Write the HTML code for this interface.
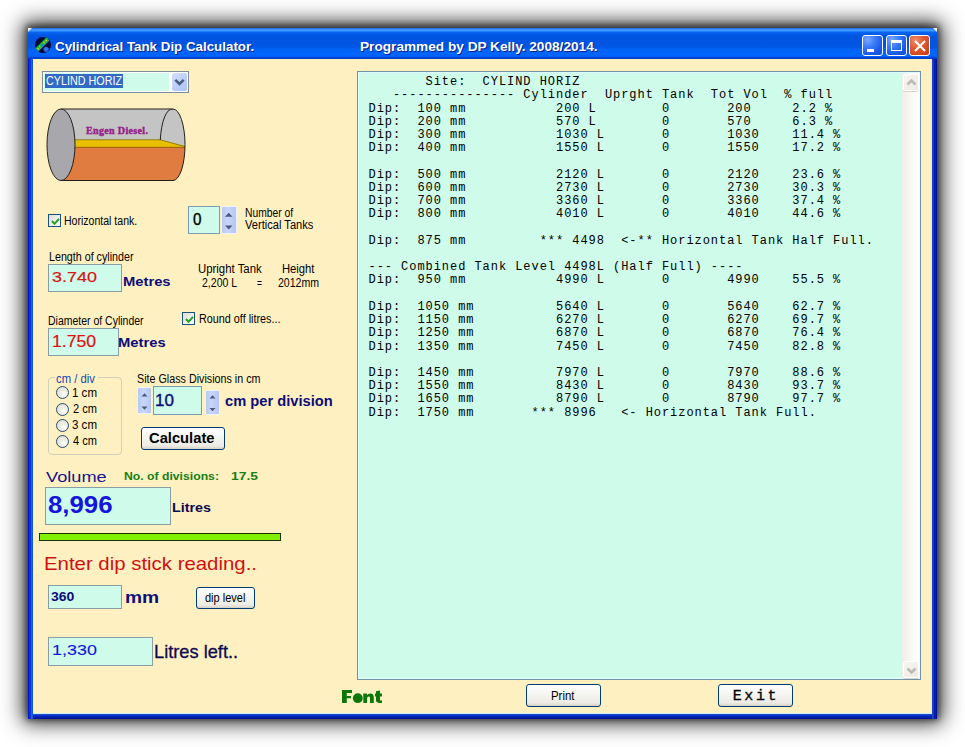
<!DOCTYPE html>
<html><head><meta charset="utf-8">
<style>
html,body{margin:0;padding:0;width:965px;height:747px;overflow:hidden;background:#fff;position:relative}
*{box-sizing:border-box}
.a{position:absolute}
.t{position:absolute;white-space:pre;}
.con{position:absolute;top:0;white-space:pre;color:#000}
.c{position:absolute;left:0;white-space:pre}
#win{position:absolute;left:28px;top:28px;width:909px;height:691px;
 box-shadow:0 -1px 6px 2px rgba(0,0,0,.5),0 -1px 20px 5px rgba(0,0,0,.8);background:#0831d9}
#title{position:absolute;left:28px;top:28px;width:909px;height:31px;
 background:linear-gradient(to bottom,#0a4fd8 0px,#3d95ff 1px,#3d95ff 3px,#0a66f0 4px,#0058e6 7px,#0054e0 10px,#0055e2 19px,#0062f6 21px,#0066ff 27px,#0058f0 29px,#003cc8 30px,#003cc8 31px)}
#lb{position:absolute;left:28px;top:59px;width:5px;height:660px;background:linear-gradient(to right,#001ccc 0,#001ccc 1px,#0a32dc 1px,#0a32dc 3px,#1664f0 3px,#1664f0 4px,#0a58e2 4px)}
#rb{position:absolute;left:932px;top:59px;width:5px;height:660px;background:linear-gradient(to right,#1a44c0 0,#1a44c0 1px,#0a3ad4 1px,#0a3ad4 2px,#0020b0 2px,#0020b0 4px,#00129a 4px)}
#rl{position:absolute;left:931px;top:59px;width:1px;height:655px;background:#c8f0ff}
#bb{position:absolute;left:28px;top:713px;width:909px;height:6px;background:linear-gradient(to bottom,#c8f0ff 0,#c8f0ff 1px,#1a44c0 1px,#1a44c0 2px,#0a3ad4 2px,#0a3ad4 3px,#0020b0 3px,#0020b0 5px,#00129a 5px)}
#client{position:absolute;left:33px;top:59px;width:898px;height:654px;background:#fff0c2}
.tb{position:absolute;background:#cffbea;border:1px solid #7a9cb0}
.tbg{position:absolute;background:#cffbea;border:1px solid #8a9ca4}
.spin{position:absolute;background:linear-gradient(to right,#b6c8f4,#c8d6fa 40%,#b4c6f2);border:1px solid #eef2fc;border-radius:2px}
.btn{position:absolute;border:1px solid #003c74;border-radius:3px;background:linear-gradient(to bottom,#fff 0%,#f6f6f2 40%,#ecebe4 85%,#d6d0c5 100%)}
.chk{position:absolute;width:13px;height:13px;border:1px solid #1c5180;background:linear-gradient(135deg,#dcdcd7,#f4f4f0 70%,#fff)}
.rad{position:absolute;width:13px;height:13px;border:1px solid #24506e;border-radius:50%;background:radial-gradient(circle at 65% 65%,#fff 0,#f0f0ea 30%,#d8d8d0 100%)}
.capbtn{position:absolute;top:35px;width:21px;height:21px;border:1px solid #fff;border-radius:3px}
</style></head><body>
<div id="win"></div>
<div id="title"></div>
<div id="bb"></div><div id="lb"></div><div id="rb"></div><div id="rl"></div>
<div id="client"></div>
<!-- title corners -->
<svg class="a" style="left:28px;top:28px" width="5" height="5"><path d="M0 0 H4 L0 4 Z" fill="#f8f8f8"/></svg>
<svg class="a" style="left:932px;top:28px" width="5" height="5"><path d="M5 0 H1 L5 4 Z" fill="#f0f0e8"/></svg>
<!-- icon -->
<svg class="a" style="left:34px;top:36px" width="18" height="18" viewBox="0 0 18 18">
 <circle cx="9" cy="9" r="8" fill="#050a38"/>
 <path d="M2.6 13.6 L13.8 2.6" stroke="#18b830" stroke-width="3.6"/>
 <path d="M3.5 13.2 L6.2 10.5 M9.6 7 L13 3.6" stroke="#d8d020" stroke-width="1.6" stroke-dasharray="1.4 1.4"/>
 <path d="M4 15.2 L15 4.4" stroke="#30d0d8" stroke-width="0.9"/>
 <circle cx="8.6" cy="9.4" r="1.2" fill="#1a7cff"/>
 <path d="M10.6 11 h3 v1 h1 v2.4 h-1 v1.4 h-3 v-1.4 h-1 v-2.4 h1 Z" fill="#2a78f0"/>
</svg>
<!-- caption buttons -->
<div class="capbtn" style="left:862px;background:radial-gradient(circle at 25% 20%,#7aa8ff 0,#3c7cf8 35%,#1a5ae8 70%,#1450d8 100%)"><div class="a" style="left:4px;top:13px;width:7px;height:3px;background:#fff"></div></div>
<div class="capbtn" style="left:886px;background:radial-gradient(circle at 25% 20%,#7aa8ff 0,#3c7cf8 35%,#1a5ae8 70%,#1450d8 100%)"><div class="a" style="left:4px;top:4px;width:11px;height:11px;border:1px solid #fff;border-top-width:3px"></div></div>
<div class="capbtn" style="left:909px;background:radial-gradient(circle at 30% 25%,#f09070 0,#e05a30 40%,#c83a10 100%)">
 <svg class="a" style="left:3.5px;top:4px" width="12" height="12" viewBox="0 0 12 12"><path d="M1 1 L11 11 M11 1 L1 11" stroke="#fff" stroke-width="2.1"/></svg></div>

<!-- combo -->
<div class="a" style="left:42px;top:71px;width:147px;height:22px;border:1px solid #7d8c9c;background:#fff">
 <div class="a" style="left:1px;top:1px;width:125px;height:18px;background:#cffbea"></div></div>
<div class="a" style="left:45px;top:74px;width:78px;height:14px;background:#316ac5"></div>
<div class="a" style="left:172px;top:73px;width:15px;height:18px;border-radius:2px;background:linear-gradient(135deg,#d6e0fc,#bccdf8 55%,#aec4f4)">
 <svg class="a" style="left:2px;top:5px" width="11" height="9" viewBox="0 0 11 9"><path d="M1.3 1.8 L5.5 6 L9.7 1.8" fill="none" stroke="#4a5d80" stroke-width="2.6"/></svg></div>
<!-- tank -->
<svg class="a" style="left:40px;top:100px" width="160" height="90" viewBox="0 0 160 90">
 <defs><clipPath id="body"><path d="M21 9 L133 9 A12 35.75 0 0 1 133 80.5 L21 80.5 Z"/></clipPath></defs>
 <path d="M21 9 L133 9 A12 35.75 0 0 1 133 80.5 L21 80.5 Z" fill="#c4c4c4"/>
 <g clip-path="url(#body)">
  <path d="M0 39.8 L120.2 39.8 L150 47.3 L160 47.3 L160 90 L0 90 Z" fill="#e8c000"/>
  <rect x="0" y="47.3" width="160" height="40" fill="#e07c40"/>
  <path d="M20 39.8 L120.2 39.8 L146 46.8" fill="none" stroke="#8a7a10" stroke-width="0.9"/>
  <path d="M20 47.3 L150 47.3" stroke="#8a5a10" stroke-width="0.9"/>
  <path d="M133 9 A12 35.75 0 0 0 120.3 40" fill="none" stroke="#202020" stroke-width="1"/>
 </g>
 <path d="M21 9 L133 9 A12 35.75 0 0 1 133 80.5 L21 80.5" fill="none" stroke="#202020" stroke-width="1"/>
 <ellipse cx="21" cy="44.75" rx="14" ry="35.75" fill="#a8a8ac" stroke="#202020" stroke-width="1"/>
 <text x="46" y="34.2" font-family="Liberation Serif" font-weight="700" font-size="10" fill="#961a86" stroke="#961a86" stroke-width="0.35" textLength="62" lengthAdjust="spacing">Engen Diesel.</text>
</svg>
<!-- checkbox horizontal -->
<div class="chk" style="left:48px;top:214px"><svg class="a" style="left:2px;top:2px" width="9" height="9" viewBox="0 0 9 9"><path d="M1 4 L3.5 6.8 L8 1.8" fill="none" stroke="#21a121" stroke-width="2"/></svg></div>
<!-- textbox 0 + spinner -->
<div class="tb" style="left:188px;top:206px;width:32px;height:28px"></div>
<div class="spin" style="left:221px;top:206px;width:16px;height:28px">
 <svg class="a" style="left:2.5px;top:4.5px" width="9" height="20" viewBox="0 0 9 20"><path d="M0 4.8 L3.75 0.8 L7.5 4.8 Z M0 13.5 L3.75 17.5 L7.5 13.5 Z" fill="#4a5a7a"/></svg></div>
<!-- length textbox -->
<div class="tbg" style="left:48px;top:264px;width:74px;height:28px"></div>
<!-- diameter textbox -->
<div class="tbg" style="left:48px;top:328px;width:71px;height:28px"></div>
<!-- round off checkbox -->
<div class="chk" style="left:182px;top:312px"><svg class="a" style="left:2px;top:2px" width="9" height="9" viewBox="0 0 9 9"><path d="M1 4 L3.5 6.8 L8 1.8" fill="none" stroke="#21a121" stroke-width="2"/></svg></div>
<!-- frame -->
<div class="a" style="left:48px;top:377px;width:74px;height:78px;border:1px solid #d0d0bf;border-radius:4px"></div>
<div class="a" style="left:55px;top:373px;width:43px;height:10px;background:#fff0c2"></div>
<div class="rad" style="left:56px;top:386px"></div>
<div class="rad" style="left:56px;top:403px"></div>
<div class="rad" style="left:56px;top:419px"></div>
<div class="rad" style="left:56px;top:435px"></div>
<!-- site glass spinners -->
<div class="spin" style="left:137px;top:387px;width:15px;height:27px">
 <svg class="a" style="left:2.5px;top:4px" width="9" height="20" viewBox="0 0 9 20"><path d="M0.5 4.5 L3.5 1.2 L6.5 4.5 Z M0.5 14.5 L3.5 17.8 L6.5 14.5 Z" fill="#4a5a7a"/></svg></div>
<div class="tb" style="left:153px;top:386px;width:49px;height:29px"></div>
<div class="spin" style="left:205px;top:390px;width:15px;height:25px">
 <svg class="a" style="left:2.5px;top:3px" width="9" height="20" viewBox="0 0 9 20"><path d="M0.5 4.5 L3.5 1.2 L6.5 4.5 Z M0.5 14 L3.5 17.3 L6.5 14 Z" fill="#4a5a7a"/></svg></div>
<!-- calculate -->
<div class="btn" style="left:141px;top:427px;width:84px;height:23px"></div>
<!-- volume textbox -->
<div class="tbg" style="left:45px;top:487px;width:126px;height:38px"></div>
<!-- green bar -->
<div class="a" style="left:39px;top:533px;width:242px;height:8px;border:1px solid #1a3000;background:#80f000"></div>
<!-- 360 textbox -->
<div class="tbg" style="left:48px;top:585px;width:74px;height:24px"></div>
<div class="btn" style="left:196px;top:587px;width:59px;height:22px"></div>
<!-- 1330 textbox -->
<div class="tbg" style="left:48px;top:637px;width:105px;height:29px"></div>
<!-- print / exit -->
<div class="btn" style="left:526px;top:684px;width:75px;height:23px"></div>
<div class="btn" style="left:718px;top:684px;width:75px;height:23px"></div>

<!-- text area -->
<div class="a" style="left:357px;top:71px;width:564px;height:609px;border:1px solid #6f94a6;background:#cffbea">
 <div class="a" style="left:0;top:0;right:0;bottom:0;border:1px solid #dcfcff;border-right-color:#e8ffff;border-bottom-color:#e8ffff"></div>
 <div class="a" style="left:544px;top:1px;width:17px;height:605px;background:linear-gradient(to right,#f0eee8,#fbfbf8 70%,#fff)"></div>
 <div class="a" style="left:545px;top:2px;width:16px;height:17px;border:1px solid #fff;border-radius:2px;box-shadow:0 1px 0 #d8d4c8;background:linear-gradient(135deg,#f6f6f2,#eceae4)">
  <svg class="a" style="left:2px;top:3px" width="11" height="9" viewBox="0 0 11 9"><path d="M1.5 6.5 L5.5 2.5 L9.5 6.5" fill="none" stroke="#bcbab2" stroke-width="2.6"/></svg></div>
 <div class="a" style="left:545px;top:589px;width:16px;height:17px;border:1px solid #fff;border-radius:2px;box-shadow:0 1px 0 #d8d4c8;background:linear-gradient(135deg,#f6f6f2,#eceae4)">
  <svg class="a" style="left:2px;top:4px" width="11" height="9" viewBox="0 0 11 9"><path d="M1.5 2.5 L5.5 6.5 L9.5 2.5" fill="none" stroke="#bcbab2" stroke-width="2.6"/></svg></div>
</div>
<!-- Font label -->
<svg class="a" style="left:338px;top:686px" width="48" height="20" viewBox="338 686 48 20">
 <g fill="#0a780a">
 <path d="M342 690 H352 V693 H346.8 V696 H351 V698.3 H346.8 V703 H342 Z"/>
 <circle cx="357.8" cy="698.2" r="4.9"/>
 <path d="M363.3 703 V693.6 H366.9 V695 Q368.5 693.3 370.6 693.4 Q373.8 693.6 373.8 697.2 V703 H370 V697.8 Q370 696.6 368.7 696.6 Q367 696.6 367 698.4 V703 Z"/>
 <path d="M376 691.2 L380 690.6 V693.6 H382 V696.4 H380 V700 Q380 700.6 381 700.6 H382 V703 H380 Q376 703 376 700.6 V696.4 H375 V693.6 H376 Z"/>
 </g>
</svg>
<div class="con" style="left:368.50px;font:400 12.00px/1 'Liberation Mono', monospace;letter-spacing:0.950px"><div class="c" style="top:76.11px">       Site:  CYLIND HORIZ</div><div class="c" style="top:89.33px">   --------------- Cylinder  Uprght Tank  Tot Vol  % full</div><div class="c" style="top:102.55px">Dip:  100 mm           200 L        0       200     2.2 %</div><div class="c" style="top:115.77px">Dip:  200 mm           570 L        0       570     6.3 %</div><div class="c" style="top:128.99px">Dip:  300 mm           1030 L       0       1030    11.4 %</div><div class="c" style="top:142.21px">Dip:  400 mm           1550 L       0       1550    17.2 %</div><div class="c" style="top:168.65px">Dip:  500 mm           2120 L       0       2120    23.6 %</div><div class="c" style="top:181.87px">Dip:  600 mm           2730 L       0       2730    30.3 %</div><div class="c" style="top:195.09px">Dip:  700 mm           3360 L       0       3360    37.4 %</div><div class="c" style="top:208.31px">Dip:  800 mm           4010 L       0       4010    44.6 %</div><div class="c" style="top:234.75px">Dip:  875 mm         *** 4498  &lt;-** Horizontal Tank Half Full.</div><div class="c" style="top:261.19px">--- Combined Tank Level 4498L (Half Full) ----</div><div class="c" style="top:274.41px">Dip:  950 mm           4990 L       0       4990    55.5 %</div><div class="c" style="top:300.85px">Dip:  1050 mm          5640 L       0       5640    62.7 %</div><div class="c" style="top:314.07px">Dip:  1150 mm          6270 L       0       6270    69.7 %</div><div class="c" style="top:327.29px">Dip:  1250 mm          6870 L       0       6870    76.4 %</div><div class="c" style="top:340.51px">Dip:  1350 mm          7450 L       0       7450    82.8 %</div><div class="c" style="top:366.95px">Dip:  1450 mm          7970 L       0       7970    88.6 %</div><div class="c" style="top:380.17px">Dip:  1550 mm          8430 L       0       8430    93.7 %</div><div class="c" style="top:393.39px">Dip:  1650 mm          8790 L       0       8790    97.7 %</div><div class="c" style="top:406.61px">Dip:  1750 mm       *** 8996   &lt;- Horizontal Tank Full.</div></div>
<div id="t_title" class="t" style="left:54.96px;top:39.57px;font:700 13.50px/1 'Liberation Sans', sans-serif;color:#fff;letter-spacing:0.000px;transform:scaleX(0.9880);transform-origin:0 0;text-shadow:1px 1px 0 #0a1e8c;">Cylindrical Tank Dip Calculator.</div>
<div id="t_title2" class="t" style="left:360.46px;top:39.57px;font:700 13.50px/1 'Liberation Sans', sans-serif;color:#fff;letter-spacing:0.000px;transform:scaleX(1.0103);transform-origin:0 0;text-shadow:1px 1px 0 #0a1e8c;">Programmed by DP Kelly. 2008/2014.</div>
<div id="t_combo" class="t" style="left:46.11px;top:74.92px;font:400 12.50px/1 'Liberation Sans', sans-serif;color:#fff;letter-spacing:0.000px;transform:scaleX(0.8622);transform-origin:0 0;">CYLIND HORIZ</div>
<div id="t_horiz" class="t" style="left:64.06px;top:214.54px;font:400 12.00px/1 'Liberation Sans', sans-serif;color:#000;letter-spacing:0.000px;transform:scaleX(0.8782);transform-origin:0 0;">Horizontal tank.</div>
<div id="t_zero" class="t" style="left:192.80px;top:212.36px;font:400 16.00px/1 'Liberation Sans', sans-serif;color:#000;letter-spacing:0.000px;transform:scaleX(0.9497);transform-origin:0 0;-webkit-text-stroke:0.35px currentColor;">0</div>
<div id="t_numof" class="t" style="left:244.53px;top:206.64px;font:400 12.00px/1 'Liberation Sans', sans-serif;color:#000;letter-spacing:0.000px;transform:scaleX(0.8573);transform-origin:0 0;">Number of</div>
<div id="t_vert" class="t" style="left:244.50px;top:219.34px;font:400 12.00px/1 'Liberation Sans', sans-serif;color:#000;letter-spacing:0.000px;transform:scaleX(0.9262);transform-origin:0 0;">Vertical Tanks</div>
<div id="t_lenc" class="t" style="left:48.57px;top:251.34px;font:400 12.00px/1 'Liberation Sans', sans-serif;color:#000;letter-spacing:0.000px;transform:scaleX(0.8915);transform-origin:0 0;">Length of cylinder</div>
<div id="t_3740" class="t" style="left:51.80px;top:269.28px;font:400 15.50px/1 'Liberation Sans', sans-serif;color:#dc1414;letter-spacing:0.000px;transform:scaleX(1.1577);transform-origin:0 0;-webkit-text-stroke:0.2px currentColor;">3.740</div>
<div id="t_metres1" class="t" style="left:123.43px;top:274.57px;font:700 13.50px/1 'Liberation Sans', sans-serif;color:#0c0c78;letter-spacing:0.000px;transform:scaleX(1.0933);transform-origin:0 0;">Metres</div>
<div id="t_upr" class="t" style="left:197.54px;top:262.54px;font:400 12.00px/1 'Liberation Sans', sans-serif;color:#000;letter-spacing:0.000px;transform:scaleX(0.9486);transform-origin:0 0;">Upright Tank</div>
<div id="t_height" class="t" style="left:282.06px;top:262.54px;font:400 12.00px/1 'Liberation Sans', sans-serif;color:#000;letter-spacing:0.000px;transform:scaleX(0.9355);transform-origin:0 0;">Height</div>
<div id="t_2200" class="t" style="left:201.91px;top:277.44px;font:400 12.00px/1 'Liberation Sans', sans-serif;color:#000;letter-spacing:0.000px;transform:scaleX(0.8781);transform-origin:0 0;">2,200 L</div>
<div id="t_eq" class="t" style="left:256.58px;top:277.44px;font:400 12.00px/1 'Liberation Sans', sans-serif;color:#000;letter-spacing:0.000px;transform:scaleX(0.7083);transform-origin:0 0;">=</div>
<div id="t_2012" class="t" style="left:278.00px;top:277.44px;font:400 12.00px/1 'Liberation Sans', sans-serif;color:#000;letter-spacing:0.000px;transform:scaleX(0.8785);transform-origin:0 0;">2012mm</div>
<div id="t_diam" class="t" style="left:48.11px;top:314.74px;font:400 12.00px/1 'Liberation Sans', sans-serif;color:#000;letter-spacing:0.000px;transform:scaleX(0.8734);transform-origin:0 0;">Diameter of Cylinder</div>
<div id="t_1750" class="t" style="left:51.91px;top:333.41px;font:400 17.00px/1 'Liberation Sans', sans-serif;color:#e01010;letter-spacing:0.000px;transform:scaleX(1.0361);transform-origin:0 0;-webkit-text-stroke:0.2px currentColor;">1.750</div>
<div id="t_metres2" class="t" style="left:118.40px;top:336.37px;font:700 13.50px/1 'Liberation Sans', sans-serif;color:#0c0c78;letter-spacing:0.000px;transform:scaleX(1.0952);transform-origin:0 0;">Metres</div>
<div id="t_round" class="t" style="left:198.58px;top:312.84px;font:400 12.00px/1 'Liberation Sans', sans-serif;color:#000;letter-spacing:0.000px;transform:scaleX(0.9000);transform-origin:0 0;">Round off litres...</div>
<div id="t_cmdiv" class="t" style="left:56.47px;top:372.84px;font:400 12.00px/1 'Liberation Sans', sans-serif;color:#1848b0;letter-spacing:0.000px;transform:scaleX(0.9419);transform-origin:0 0;">cm / div</div>
<div id="t_r1" class="t" style="left:71.97px;top:386.94px;font:400 12.00px/1 'Liberation Sans', sans-serif;color:#000;letter-spacing:0.000px;transform:scaleX(0.9609);transform-origin:0 0;">1 cm</div>
<div id="t_r2" class="t" style="left:72.97px;top:403.24px;font:400 12.00px/1 'Liberation Sans', sans-serif;color:#000;letter-spacing:0.000px;transform:scaleX(0.9208);transform-origin:0 0;">2 cm</div>
<div id="t_r3" class="t" style="left:71.97px;top:419.44px;font:400 12.00px/1 'Liberation Sans', sans-serif;color:#000;letter-spacing:0.000px;transform:scaleX(0.9609);transform-origin:0 0;">3 cm</div>
<div id="t_r4" class="t" style="left:72.97px;top:435.34px;font:400 12.00px/1 'Liberation Sans', sans-serif;color:#000;letter-spacing:0.000px;transform:scaleX(0.9208);transform-origin:0 0;">4 cm</div>
<div id="t_sgd" class="t" style="left:137.02px;top:372.84px;font:400 12.00px/1 'Liberation Sans', sans-serif;color:#000;letter-spacing:0.000px;transform:scaleX(0.8949);transform-origin:0 0;">Site Glass Divisions in cm</div>
<div id="t_10" class="t" style="left:155.38px;top:391.93px;font:400 16.50px/1 'Liberation Sans', sans-serif;color:#0c0c78;letter-spacing:0.000px;transform:scaleX(1.0323);transform-origin:0 0;-webkit-text-stroke:0.35px currentColor;">10</div>
<div id="t_cmper" class="t" style="left:224.95px;top:394.05px;font:700 14.00px/1 'Liberation Sans', sans-serif;color:#0c0c78;letter-spacing:0.000px;transform:scaleX(1.0493);transform-origin:0 0;">cm per division</div>
<div id="t_calc" class="t" style="left:149.04px;top:432.22px;font:700 13.80px/1 'Liberation Sans', sans-serif;color:#000;letter-spacing:0.000px;transform:scaleX(1.0677);transform-origin:0 0;">Calculate</div>
<div id="t_volume" class="t" style="left:45.93px;top:468.50px;font:400 15.00px/1 'Liberation Sans', sans-serif;color:#14148c;letter-spacing:0.000px;transform:scaleX(1.2124);transform-origin:0 0;">Volume</div>
<div id="t_nodiv" class="t" style="left:123.91px;top:471.47px;font:700 11.50px/1 'Liberation Sans', sans-serif;color:#168016;letter-spacing:0.000px;transform:scaleX(1.0615);transform-origin:0 0;">No. of divisions:</div>
<div id="t_175" class="t" style="left:230.87px;top:471.47px;font:700 11.50px/1 'Liberation Sans', sans-serif;color:#168016;letter-spacing:0.000px;transform:scaleX(1.2103);transform-origin:0 0;">17.5</div>
<div id="t_8996" class="t" style="left:47.89px;top:493.63px;font:700 23.00px/1 'Liberation Sans', sans-serif;color:#1414dc;letter-spacing:0.000px;transform:scaleX(1.1216);transform-origin:0 0;">8,996</div>
<div id="t_litres" class="t" style="left:172.42px;top:501.30px;font:700 13.00px/1 'Liberation Sans', sans-serif;color:#0c0c50;letter-spacing:0.000px;transform:scaleX(1.1003);transform-origin:0 0;">Litres</div>
<div id="t_enter" class="t" style="left:43.85px;top:554.74px;font:400 18.50px/1 'Liberation Sans', sans-serif;color:#d01010;letter-spacing:0.000px;transform:scaleX(1.1016);transform-origin:0 0;">Enter dip stick reading..</div>
<div id="t_360" class="t" style="left:50.81px;top:590.54px;font:700 12.00px/1 'Liberation Sans', sans-serif;color:#0c0c78;letter-spacing:0.000px;transform:scaleX(1.1692);transform-origin:0 0;">360</div>
<div id="t_mm" class="t" style="left:124.74px;top:588.61px;font:700 17.00px/1 'Liberation Sans', sans-serif;color:#0c0c78;letter-spacing:0.000px;transform:scaleX(1.1294);transform-origin:0 0;">mm</div>
<div id="t_diplvl" class="t" style="left:205.48px;top:592.34px;font:400 12.00px/1 'Liberation Sans', sans-serif;color:#000;letter-spacing:0.000px;transform:scaleX(0.9165);transform-origin:0 0;">dip level</div>
<div id="t_1330" class="t" style="left:51.69px;top:641.80px;font:400 15.00px/1 'Liberation Sans', sans-serif;color:#1414dc;letter-spacing:0.000px;transform:scaleX(1.1948);transform-origin:0 0;-webkit-text-stroke:0.1px currentColor;">1,330</div>
<div id="t_left" class="t" style="left:154.49px;top:643.04px;font:400 18.50px/1 'Liberation Sans', sans-serif;color:#0c0c50;letter-spacing:0.000px;transform:scaleX(0.9856);transform-origin:0 0;-webkit-text-stroke:0.3px currentColor;">Litres left..</div>
<div id="t_print" class="t" style="left:551.03px;top:689.74px;font:400 12.00px/1 'Liberation Sans', sans-serif;color:#000;letter-spacing:0.000px;transform:scaleX(0.9506);transform-origin:0 0;">Print</div>
<div id="t_exit" class="t" style="left:732.70px;top:689.41px;font:400 15.00px/1 'Liberation Mono', monospace;color:#000;letter-spacing:2.600px;-webkit-text-stroke:0.3px #000;">Exit</div>
</body></html>
